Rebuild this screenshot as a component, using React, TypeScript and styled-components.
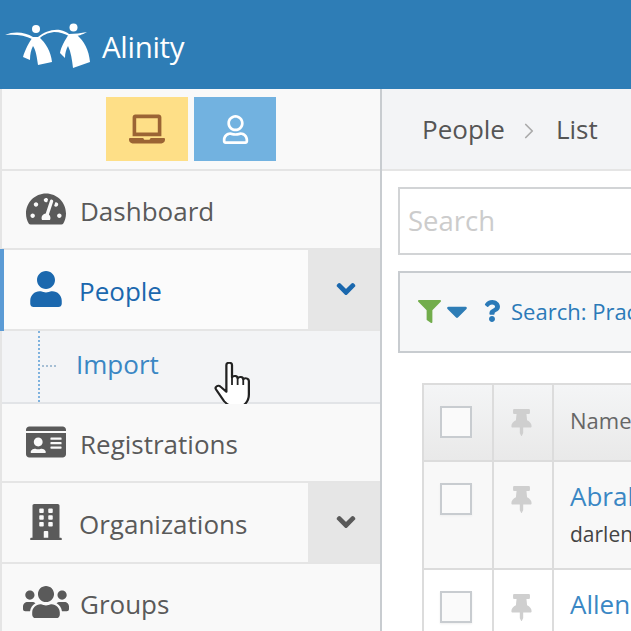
import React from "react";
import styled, { createGlobalStyle } from "styled-components";
import { FaTachometerAlt, FaUser, FaRegUser, FaIdCard, FaBuilding, FaUsers, FaChevronDown, FaLaptop, FaFilter, FaQuestion, FaThumbtack, FaCaretDown } from "react-icons/fa";
import { ChevronRight } from "lucide-react";

const Global = createGlobalStyle`
  html, body { margin: 0; padding: 0; width: 631px; height: 631px; overflow: hidden; background: #fff; }
  body { font-family: "Open Sans", "Liberation Sans", sans-serif; color: #555; }
  * { box-sizing: border-box; }
`;
const Page = styled.div`width: 631px; height: 631px; overflow: hidden; display: flex; flex-direction: column;`;
const Header = styled.header`
  height: 89px; flex: none; background: #2e7db6; display: flex; align-items: center; gap: 10px; color: #fff;
`;
const LogoMark = styled.svg`width: 92px; height: 52px; margin-top: 3px; flex: none;`;
const Brand = styled.span`font-size: 29.5px; letter-spacing: -0.3px; margin-top: 3px;`;
const Body = styled.div`display: flex; flex: 1; min-height: 0;`;
const Sidebar = styled.nav`
  width: 382px; flex: none; background: #f9f9f9; border-left: 2px solid #e5e5e5; border-right: 2px solid #c8ccd0; display: flex; flex-direction: column;
`;
const Tools = styled.div`
  height: 82px; flex: none; display: flex; justify-content: flex-start; gap: 6px; padding: 8px 0 0 104px; border-bottom: 2px solid #e5e5e5;
`;
const ToolButton = styled.div<{ $bg: string; $fg: string; $size: number }>`
  width: 82px; height: 64px; background: ${(p) => p.$bg}; color: ${(p) => p.$fg}; display: flex; align-items: center; justify-content: center; font-size: ${(p) => p.$size}px;
`;
const Row = styled.div<{ $h: number; $active?: boolean }>`
  height: ${(p) => p.$h}px; flex: none; display: flex; border-bottom: 2px solid #e5e5e5; position: relative;
  background: ${(p) => (p.$active ? "#fbfbfb" : "#f9f9f9")};
  color: ${(p) => (p.$active ? "#1b68ae" : "#5a5a5a")};
`;
const ActiveMark = styled.span`position: absolute; left: -2px; top: -1px; bottom: -2px; width: 4px; background: #5b9bd5;`;
const RowMain = styled.div`
  flex: 1; display: flex; align-items: center; font-size: 26px; padding-left: 22px;
`;
const IconSlot = styled.span<{ $size: number }>`
  width: 44px; flex: none; display: flex; justify-content: center; margin-bottom: 2px; font-size: ${(p) => p.$size}px;
  & > svg { flex: none; }
`;
const RowLabel = styled.span<{ $pad: number }>`margin-left: ${(p) => p.$pad}px; margin-top: 2px; line-height: 1;`;
const Expander = styled.div`
  width: 72px; flex: none; background: #e6e6e6; display: flex; align-items: center; justify-content: center; font-size: 20px; padding: 0 0 2px 3px;
  & > svg { stroke: currentColor; stroke-width: 40; }
`;
const SubRow = styled.div`
  height: 73px; flex: none; background: #f3f4f6; border-bottom: 2px solid #e2e4e7; position: relative; display: flex; align-items: center;
  padding: 0 0 6px 74px; font-size: 26px; color: #3a87c4;
`;
const TreeV = styled.span`position: absolute; left: 36px; top: 0; bottom: 0; border-left: 2px dotted #7fb2de;`;
const TreeH = styled.span`position: absolute; left: 40px; top: 34px; width: 14px; border-top: 2px dotted #a5bed4;`;
const Cursor = styled.svg`position: absolute; left: 212px; top: 31px; width: 36px; height: 46px;`;
const Main = styled.main`flex: 1; min-width: 0; display: flex; flex-direction: column; background: #fff; overflow: hidden;`;
const Crumbs = styled.div`
  height: 82px; flex: none; background: #f3f4f6; border-bottom: 2px solid #e5e5e5; display: flex; align-items: center; padding: 0 0 0 40px; font-size: 26px; color: #555;
`;
const CrumbSep = styled(ChevronRight)`color: #aaa; flex: none; margin: 3px 14px 0 11px;`;
const Search = styled.div`
  height: 68px; flex: none; margin: 16px 0 0 16px; border: 2px solid #d2d4d6; border-right: none; display: flex; align-items: center; padding: 0 0 2px 8px; font-size: 27.5px; color: #ccc;
`;
const FilterBar = styled.div`
  height: 82px; flex: none; margin: 16px 0 0 16px; border: 2px solid #c8ccd0; border-right: none; background: #f6f7f8; display: flex; align-items: center; padding: 0 0 2px 18px; font-size: 22px; color: #2b7ab8; white-space: nowrap;
`;
const FilterIcon = styled(FaFilter)`color: #72ad4c; font-size: 23px; flex: none;`;
const Caret = styled(FaCaretDown)`color: #2e7db6; font-size: 34px; margin-left: -1px; flex: none;`;
const Help = styled(FaQuestion)`color: #2b7ab8; font-size: 22px; margin: 0 8px 0 7px; flex: none;`;
const Table = styled.div`
  width: 460px; flex: none; margin: 30px 0 0 40px; display: grid; grid-template-columns: 70px 60px 1fr; grid-template-rows: 77px 108px 70px; border-top: 2px solid #dcdcdc; border-left: 2px solid #dcdcdc;
`;
const Cell = styled.div<{ $variant: "head" | "odd" | "even"; $name?: boolean }>`
  border-right: 2px solid #dcdcdc; border-bottom: 2px solid #dcdcdc; min-width: 0; overflow: hidden; white-space: nowrap;
  background: ${(p) => (p.$variant === "head" ? "linear-gradient(#f4f5f6, #e9e9e9)" : p.$variant === "odd" ? "#f8f8f8" : "#fff")};
  display: flex; flex-direction: column; align-items: ${(p) => (p.$name ? "flex-start" : "center")};
  padding: 21px ${(p) => (p.$name ? 0 : 4)}px 0 ${(p) => (p.$name ? 16 : 0)}px;
`;
const Check = styled.span`width: 32px; height: 32px; flex: none; border: 2px solid #c8ccd0; background: #fafafa; display: block; box-shadow: 0 1px 2px #eee;`;
const Pin = styled(FaThumbtack)`font-size: 27px; color: #cfcfcf; margin-top: 3px; flex: none;`;
const HeadText = styled.span`font-size: 22px; color: #666; line-height: 30px; margin-top: -1px;`;
const LinkText = styled.span`font-size: 26px; color: #3a87c4; line-height: 30px; margin-top: -2px;`;
const SubText = styled.span`font-size: 21px; color: #444; line-height: 30px; margin-top: 8px;`;

const Logo = () => (
  <LogoMark viewBox="0 20 92 52" fill="#fff">
    <circle cx="36" cy="29" r="4" />
    <circle cx="73.5" cy="27.5" r="4" />
    <path d="M5 35 C14 31 25 32 33 37 L38 37 C44 32 52 29 60 30 C64 31 67 32 69 34 C75 34 81 33 87 32 C82 35 77 36 77 36 L69 36 C65 34 60 32 54 32 C47 33 43 35 39 39 L32 39 C25 35 15 34 5 35Z" />
    <path d="M33 37 C29 42 25 50 23 57 L30 60 C30 54 31 50 33 46 C36 50 37 58 38 65 L52 62 C51 52 46 43 39 37Z" />
    <path d="M69 34 C65 40 61 47 60 53 L65 58 C65 53 66 50 68 46 C71 52 72 60 73 68 L90 62 C89 50 84 41 77 35Z" />
  </LogoMark>
);

const Hand = () => (
  <Cursor viewBox="0 0 32 48" preserveAspectRatio="none">
    <path d="M11 3c0-3 5-3 5 0v13c1-2 5-2 5 1 1-2 5-2 5 1 1-2 5-1 5 2v14c0 7-4 13-11 13-5 0-8-2-11-6L2 29c-2-3 2-6 4-3l5 5z" fill="#fff" stroke="#222" strokeWidth="2" strokeLinejoin="round" />
    <path d="M16 16v8M21 17v7M26 18v6" stroke="#222" strokeWidth="1.6" fill="none" />
  </Cursor>
);

export default function App() {
  return (
    <Page>
      <Global />
      <Header>
        <Logo />
        <Brand>Alinity</Brand>
      </Header>
      <Body>
        <Sidebar>
          <Tools>
            <ToolButton $bg="#fedf87" $fg="#9b6434" $size={36}><FaLaptop /></ToolButton>
            <ToolButton $bg="#72b2e0" $fg="#fff" $size={29}><FaRegUser /></ToolButton>
          </Tools>
          <Row $h={79}>
            <RowMain><IconSlot $size={40}><FaTachometerAlt /></IconSlot><RowLabel $pad={12}>Dashboard</RowLabel></RowMain>
          </Row>
          <Row $h={81} $active>
            <ActiveMark />
            <RowMain><IconSlot $size={36}><FaUser /></IconSlot><RowLabel $pad={11}>People</RowLabel></RowMain>
            <Expander><FaChevronDown /></Expander>
          </Row>
          <SubRow>
            <TreeV /><TreeH />
            Import
            <Hand />
          </SubRow>
          <Row $h={79}>
            <RowMain><IconSlot $size={40}><FaIdCard /></IconSlot><RowLabel $pad={12}>Registrations</RowLabel></RowMain>
          </Row>
          <Row $h={81}>
            <RowMain><IconSlot $size={36}><FaBuilding /></IconSlot><RowLabel $pad={11}>Organizations</RowLabel></RowMain>
            <Expander><FaChevronDown /></Expander>
          </Row>
          <Row $h={79}>
            <RowMain><IconSlot $size={46}><FaUsers /></IconSlot><RowLabel $pad={12}>Groups</RowLabel></RowMain>
          </Row>
        </Sidebar>
        <Main>
          <Crumbs>People<CrumbSep size={26} strokeWidth={1.6} />List</Crumbs>
          <Search>Search</Search>
          <FilterBar><FilterIcon /><Caret /><Help />Search: Practice Register</FilterBar>
          <Table>
            <Cell $variant="head"><Check /></Cell>
            <Cell $variant="head"><Pin /></Cell>
            <Cell $variant="head" $name><HeadText>Name</HeadText></Cell>
            <Cell $variant="odd"><Check /></Cell>
            <Cell $variant="odd"><Pin /></Cell>
            <Cell $variant="odd" $name><LinkText>Abraham</LinkText><SubText>darlene@example.com</SubText></Cell>
            <Cell $variant="even"><Check /></Cell>
            <Cell $variant="even"><Pin /></Cell>
            <Cell $variant="even" $name><LinkText>Allen</LinkText></Cell>
          </Table>
        </Main>
      </Body>
    </Page>
  );
}
